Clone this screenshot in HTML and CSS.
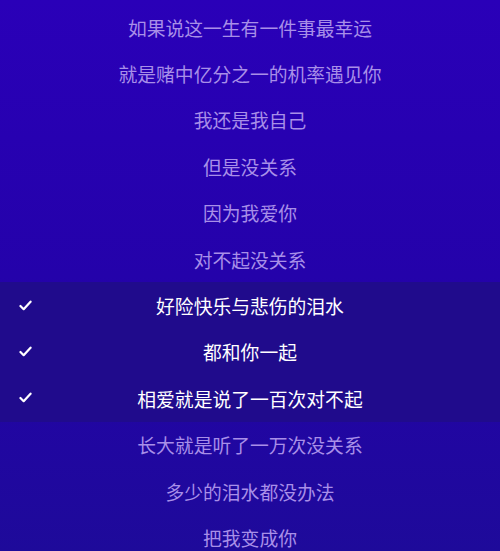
FILE: index.html
```html
<!DOCTYPE html>
<html lang="zh">
<head>
<meta charset="utf-8">
<link rel="stylesheet" href="styles.css">
</head>
<body>
<div class="lyrics">
  <div class="line">如果说这一生有一件事最幸运</div>
  <div class="line">就是赌中亿分之一的机率遇见你</div>
  <div class="line">我还是我自己</div>
  <div class="line">但是没关系</div>
  <div class="line">因为我爱你</div>
  <div class="line">对不起没关系</div>
  <div class="selected">
    <div class="line on"><svg class="check" viewBox="0 0 14 12"><path d="M1.5 6.5 L5 10 L12.5 1.8"/></svg>好险快乐与悲伤的泪水</div>
    <div class="line on"><svg class="check" viewBox="0 0 14 12"><path d="M1.5 6.5 L5 10 L12.5 1.8"/></svg>都和你一起</div>
    <div class="line on"><svg class="check" viewBox="0 0 14 12"><path d="M1.5 6.5 L5 10 L12.5 1.8"/></svg>相爱就是说了一百次对不起</div>
  </div>
  <div class="line">长大就是听了一万次没关系</div>
  <div class="line">多少的泪水都没办法</div>
  <div class="line">把我变成你</div>
</div>
</body>
</html>
```
FILE: styles.css
```css
html, body {
  margin: 0;
  padding: 0;
  width: 500px;
  height: 551px;
  overflow: hidden;
}
body {
  background: linear-gradient(180deg, #2a00b8 0%, #2402aa 50%, #1e0a9a 100%);
  font-family: "Noto Sans CJK SC", "Noto Sans", sans-serif;
}
.lyrics {
  padding-top: 4px;
  display: flex;
  flex-direction: column;
}
.line {
  position: relative;
  height: 46.4px;
  display: flex;
  align-items: center;
  justify-content: center;
  font-size: 18.8px;
  color: #a88fe8;
  white-space: nowrap;
}
.selected {
  background: #200b8c;
  display: flex;
  flex-direction: column;
}
.line.on {
  color: #ffffff;
  font-weight: 400;
}
.check {
  position: absolute;
  left: 19px;
  top: 50%;
  width: 13px;
  height: 11px;
  margin-top: -6px;
  fill: none;
  stroke: #ffffff;
  stroke-width: 2.4;
  stroke-linecap: round;
  stroke-linejoin: round;
}
```
